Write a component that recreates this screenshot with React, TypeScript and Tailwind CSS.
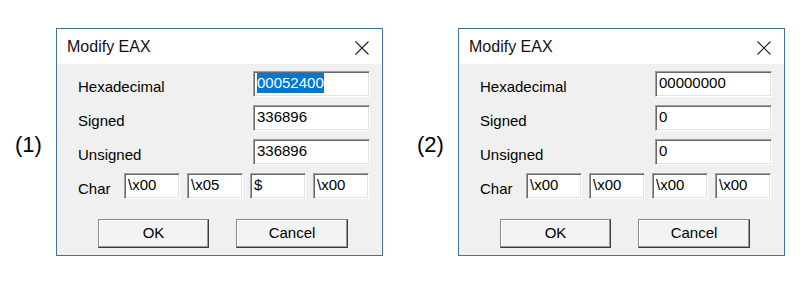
import React from 'react'

type DialogValues = {
  hex: string
  signed: string
  unsigned: string
  chars: string[]
  selected?: boolean
}

const font = { fontFamily: '"Liberation Sans", Arial, sans-serif' }

function Field({ value, width, selected }: { value: string; width: string; selected?: boolean }) {
  return (
    <div
      className={`${width} h-[26px] bg-white border border-t-[#a0a0a0] border-l-[#a0a0a0] border-r-white border-b-white shadow-[inset_1px_1px_0_#696969,inset_-1px_-1px_0_#e3e3e3] pl-[3px] pt-[1px] text-[15px] leading-[20px] text-black`}
    >
      {selected ? <span className="bg-[#0078d7] text-white inline-block leading-[20px]">{value}</span> : value}
    </div>
  )
}

function Button({ label, width }: { label: string; width: string }) {
  return (
    <div
      className={`${width} h-[29px] flex items-center justify-center bg-[#f3f3f3] border border-t-[#8a8a8a] border-l-[#8a8a8a] border-r-[#3c3c3c] border-b-[#3c3c3c] shadow-[inset_-1px_-1px_0_#9a9a9a,inset_1px_1px_0_#ffffff] text-[15px] text-black`}
    >
      {label}
    </div>
  )
}

function Row({ label, children }: { label: string; children: React.ReactNode }) {
  return (
    <div className="flex items-start justify-between h-[26px]">
      <span className="mt-[7px] text-[15px] leading-[18px] text-black">{label}</span>
      {children}
    </div>
  )
}

function ModifyDialog({ v }: { v: DialogValues }) {
  return (
    <div className="w-[327px] h-[228px] border border-[#41729b] bg-[#f0f0f0] flex flex-col" style={font}>
      {/* title bar */}
      <div className="h-[35px] bg-white flex items-center justify-between pl-[10px] pr-[13px]">
        <span className="text-[16px] text-[#111]">Modify EAX</span>
        <svg width="14" height="14" viewBox="0 0 14 14" className="mt-[2px]">
          <path d="M0.5 0.5 L13.5 13.5 M13.5 0.5 L0.5 13.5" stroke="#222" strokeWidth="1.1" fill="none" />
        </svg>
      </div>

      {/* body */}
      <div className="flex-1 pt-[7px] pl-[21px] pr-[12px] flex flex-col">
        <div className="flex flex-col gap-[8px]">
          <Row label="Hexadecimal">
            <Field value={v.hex} width="w-[117px]" selected={v.selected} />
          </Row>
          <Row label="Signed">
            <Field value={v.signed} width="w-[117px]" />
          </Row>
          <Row label="Unsigned">
            <Field value={v.unsigned} width="w-[117px]" />
          </Row>
          <div className="flex items-start h-[26px]">
            <span className="w-[46px] mt-[7px] text-[15px] leading-[18px] text-black">Char</span>
            <div className="flex gap-[7px]">
              {v.chars.map((c, i) => (
                <Field key={i} value={c} width="w-[56px]" />
              ))}
            </div>
          </div>
        </div>

        <div className="flex gap-[27px] mt-[20px] ml-[20px]">
          <Button label="OK" width="w-[111px]" />
          <Button label="Cancel" width="w-[112px]" />
        </div>
      </div>
    </div>
  )
}

const dialogs: { tag: string; v: DialogValues }[] = [
  { tag: '(1)', v: { hex: '00052400', signed: '336896', unsigned: '336896', chars: ['\\x00', '\\x05', '$', '\\x00'], selected: true } },
  { tag: '(2)', v: { hex: '00000000', signed: '0', unsigned: '0', chars: ['\\x00', '\\x00', '\\x00', '\\x00'] } },
]

export default function App() {
  return (
    <div className="w-[812px] h-[282px] bg-white flex items-start pt-[28px] pl-[15px] gap-[34px]" style={font}>
      {dialogs.map(d => (
        <div key={d.tag} className="flex items-center">
          <span className="w-[41px] pt-[6px] text-[22px] leading-[26px] text-black">{d.tag}</span>
          <ModifyDialog v={d.v} />
        </div>
      ))}
    </div>
  )
}
